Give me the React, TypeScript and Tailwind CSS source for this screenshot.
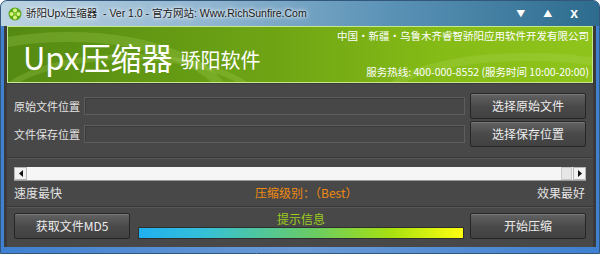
import React from "react";

const cn = '"Noto Sans CJK SC", "Liberation Sans", sans-serif';

function Btn({ children, className = "" }: { children: React.ReactNode; className?: string }) {
  return (
    <div
      className={
        "flex items-center justify-center h-[26px] w-[116px] shrink-0 rounded-[2px] border border-[#262626] bg-[linear-gradient(#636363,#4a4a4a_50%,#414141)] text-[12px] text-[#ececec] shadow-[inset_0_1px_0_#7a7a7a] " +
        className
      }
    >
      {children}
    </div>
  );
}

function Input() {
  return <div className="flex-1 h-[18px] border border-[#5e5e5e] bg-[#474747] shadow-[inset_1px_1px_0_#3a3a3a]" />;
}

export default function App() {
  return (
    <div className="w-[600px] h-[254px] bg-white" style={{ fontFamily: cn }}>
      <div className="w-[600px] h-[254px] rounded-t-[7px] overflow-hidden bg-[linear-gradient(90deg,#3f80d0,#6a9ad6_50%,#3f80d0)] flex flex-col px-[3px] pb-[6px] border border-[#33577a]">
        {/* title bar */}
        <div className="-mx-[3px] px-[7px] h-[25px] shrink-0 flex items-center bg-[linear-gradient(90deg,#bcd3e2,#8fb5d0_35%,#5a92b6_65%,#2d6c8e)]">
          <svg width="14" height="14" viewBox="0 0 14 14" className="mr-[4px]">
            <circle cx="7" cy="7" r="6.5" fill="#5aa81a" />
            <circle cx="7" cy="3.6" r="2" fill="#d6f27a" />
            <circle cx="7" cy="10.4" r="2" fill="#d6f27a" />
            <circle cx="3.6" cy="7" r="2" fill="#d6f27a" />
            <circle cx="10.4" cy="7" r="2" fill="#d6f27a" />
            <circle cx="7" cy="7" r="1.8" fill="#8cc83a" />
          </svg>
          <span
            className="text-[10.5px] text-[#1a1a1a] [text-shadow:0_0_6px_#ffffff,0_0_3px_#ffffff]"
            style={{ fontFamily: '"Liberation Sans", "Noto Sans CJK SC", sans-serif' }}
          >
            骄阳Upx压缩器&nbsp; - Ver 1.0 - 官方网站: Www.RichSunfire.Com
          </span>
          <div className="ml-auto flex items-center text-white mr-[14px] gap-[18px]">
            <span className="text-[9px]">▼</span>
            <span className="text-[9px]">▲</span>
            <span className="text-[14px] font-bold" style={{ fontFamily: '"Liberation Sans", sans-serif' }}>x</span>
          </div>
        </div>
        <div className="flex-1 flex flex-col bg-[#3a3a3a] px-[3px]">
          {/* green header */}
          <div className="relative h-[57px] shrink-0 border border-[#c8e890] overflow-hidden bg-[linear-gradient(90deg,#548a12,#6ea414_45%,#86bc16_75%,#8fc41c)]">
            <svg className="absolute inset-0" width="588" height="57" viewBox="0 0 588 57">
              <ellipse cx="60" cy="80" rx="160" ry="70" fill="none" stroke="#a6d25a" strokeOpacity="0.25" strokeWidth="10" />
              <ellipse cx="120" cy="90" rx="140" ry="60" fill="none" stroke="#c0e070" strokeOpacity="0.2" strokeWidth="6" />
              <ellipse cx="520" cy="70" rx="140" ry="40" fill="none" stroke="#b8e070" strokeOpacity="0.2" strokeWidth="8" />
            </svg>
            <div className="relative flex h-full">
              <div className="flex items-end pl-[15px] pb-[8px]">
                <span className="text-[31px] leading-[34px] text-white">Upx压缩器</span>
                <span className="text-[20px] leading-[22px] text-white ml-[8px] mb-[3px]">骄阳软件</span>
              </div>
              <div className="ml-auto flex flex-col items-end justify-between pr-[3px] pt-[2px] pb-[3px] text-[10.5px] leading-[14px] text-white">
                <span>中国・新疆・乌鲁木齐睿智骄阳应用软件开发有限公司</span>
                <span>服务热线: 400-000-8552 (服务时间 10:00-20:00)</span>
              </div>
            </div>
          </div>
          {/* body */}
          <div className="flex-1 bg-[#484848] flex flex-col pl-[7px] pr-[7px] pt-[9px] mt-[1px]">
            <div className="flex items-center h-[26px] text-[12px] text-[#e4e4e4]">
              <span className="w-[70px] shrink-0 whitespace-nowrap text-[11px]">原始文件位置</span>
              <Input />
              <Btn className="ml-[5px]">选择原始文件</Btn>
            </div>
            <div className="flex items-center h-[26px] mt-[2px] text-[12px] text-[#e4e4e4]">
              <span className="w-[70px] shrink-0 whitespace-nowrap text-[11px]">文件保存位置</span>
              <Input />
              <Btn className="ml-[5px]">选择保存位置</Btn>
            </div>
            <div className="mt-[10px] -ml-[7px] -mr-[7px] border-t border-[#363636] border-b border-b-[#575757]" />
            <div className="mt-[8px] h-[14px] bg-[#f6f6f6] flex items-center border-b border-[#9a9a9a]">
              <div className="w-[13px] h-[13px] bg-[#f2f2f2] border border-[#b8b8b8] flex items-center justify-center">
                <svg width="4" height="7" viewBox="0 0 4 7"><path d="M4 0 L0 3.5 L4 7Z" fill="#111" /></svg>
              </div>
              <div className="flex-1" />
              <div className="w-[11px] h-[13px] bg-[#e6e6e6] border border-[#c8c8c8]" />
              <div className="w-[13px] h-[13px] ml-[1px] bg-[#f2f2f2] border border-[#b8b8b8] flex items-center justify-center">
                <svg width="4" height="7" viewBox="0 0 4 7"><path d="M0 0 L4 3.5 L0 7Z" fill="#111" /></svg>
              </div>
            </div>
            <div className="mt-[4px] flex items-center h-[16px] text-[12px] text-[#e4e4e4]">
              <span className="w-[48px]">速度最快</span>
              <span className="ml-[193px] text-[#f08a10]">压缩级别：（Best）</span>
              <span className="ml-auto mr-[1px]">效果最好</span>
            </div>
            <div className="mt-[5px] -ml-[7px] -mr-[7px] border-t border-[#363636] border-b border-b-[#575757]" />
            <div className="mt-[4px] flex items-center h-[27px]">
              <Btn>获取文件MD5</Btn>
              <div className="ml-[8px] w-[326px] flex flex-col items-center">
                <span className="text-[12px] leading-[14px] text-[#9ccc1c]">提示信息</span>
                <div className="mt-[1px] w-full h-[12px] border border-[#2e2e2e] bg-[linear-gradient(90deg,#20b0f0,#34c0d8_20%,#6ccc60_55%,#a8e010_78%,#ffff10)]" />
              </div>
              <Btn className="ml-auto">开始压缩</Btn>
            </div>
          </div>
        </div>
      </div>
    </div>
  );
}
